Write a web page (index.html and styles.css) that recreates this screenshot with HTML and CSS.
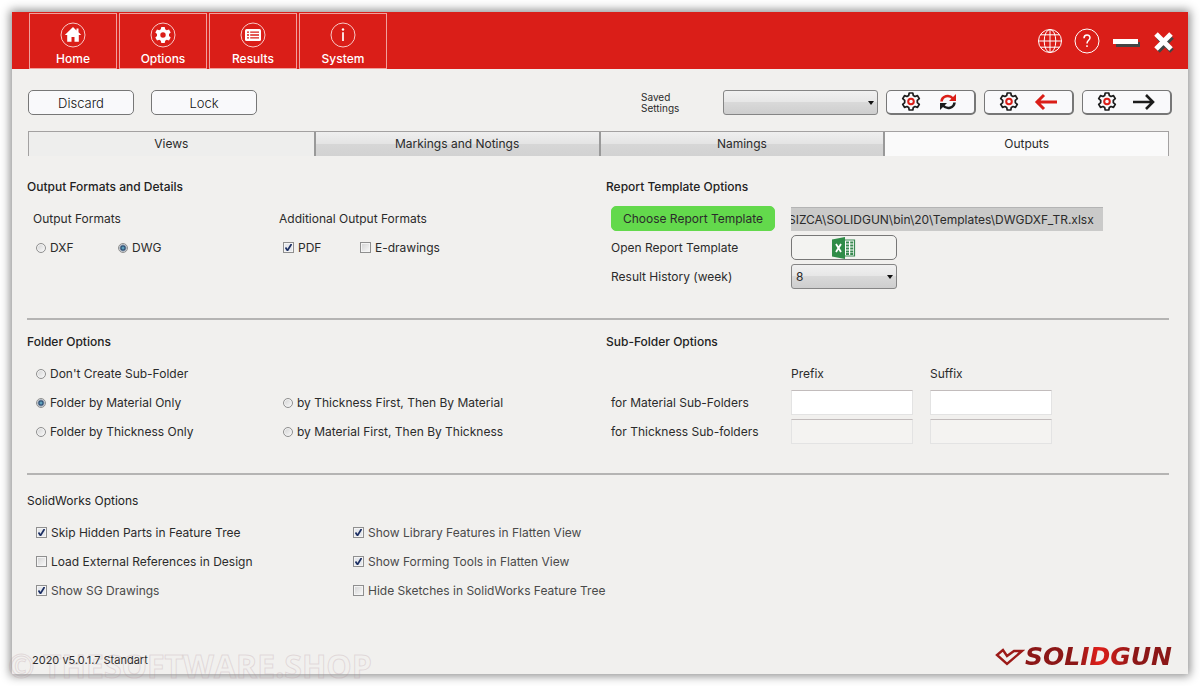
FILE: index.html
```html
<!DOCTYPE html>
<html lang="en">
<head>
<meta charset="utf-8">
<title>SolidGun</title>
<link rel="stylesheet" href="styles.css">
</head>
<body>
<svg width="0" height="0" class="defs" aria-hidden="true">
  <defs>
    <symbol id="gear" viewBox="0 0 20 20">
      <path d="M8.200 1h3.600l.5 2.500 1.700 1 2.500-.9 1.800 3.100-2 1.700v2.200l2 1.700-1.800 3.100-2.500-.9-1.700 1-.5 2.500H8.200l-.5-2.500-1.700-1-2.500.9-1.800-3.100 2-1.700V8.400l-2-1.700 1.800-3.100 2.500.9 1.700-1z" fill="none" stroke="#1c1c1c" stroke-width="1.700" stroke-linejoin="round"/>
      <circle cx="10" cy="9.500" r="2.800" fill="none" stroke="#da1e18" stroke-width="2"/>
    </symbol>
  </defs>
</svg>
<div class="window">
  <header class="header">
    <nav class="nav">
      <button class="nav-btn"><svg viewBox="0 0 26 26"><circle class="ring" cx="13" cy="13" r="12"/><path fill="#fff" d="M13 5 4.800 13h2.400v6.800h4.300V15h3v4.800h4.300V13h2.400l-2.700-2.700V6.500h-2v1.900z"/></svg>Home</button>
      <button class="nav-btn"><svg viewBox="0 0 26 26"><circle class="ring" cx="13" cy="13" r="12"/><path fill="#fff" fill-rule="evenodd" d="M11.300 5h3.400l.5 2.300 1.500.9 2.300-.8 1.700 3-1.700 1.600v2l1.700 1.600-1.700 3-2.300-.8-1.500.9-.5 2.300h-3.400l-.5-2.300-1.500-.9-2.300.8-1.700-3L7 14v-2l-1.700-1.600 1.700-3 2.300.8 1.500-.9zM13 10.300a2.700 2.700 0 1 0 0 5.400 2.700 2.700 0 0 0 0-5.400z"/></svg>Options</button>
      <button class="nav-btn"><svg viewBox="0 0 26 26"><circle class="ring" cx="13" cy="13" r="12"/><rect x="5" y="7" width="16" height="12" rx="1.500" fill="#fff"/><path stroke="#da1e18" stroke-width="1.300" d="M7 10.200h2M10.200 10.200H19M7 13h2M10.200 13H19M7 15.800h2M10.200 15.800H19"/></svg>Results</button>
      <button class="nav-btn"><svg viewBox="0 0 26 26"><circle class="ring" cx="13" cy="13" r="12"/><circle cx="13" cy="7.500" r="1.200" fill="#fff"/><path stroke="#fff" stroke-width="1.700" d="M13 10.200V19"/></svg>System</button>
    </nav>
    <div class="win-actions">
      <button aria-label="Language"><svg width="26" height="26" viewBox="0 0 26 26" class="line"><circle cx="13" cy="13" r="11.500"/><ellipse cx="13" cy="13" rx="5.800" ry="11.500"/><path d="M13 1.500v23M1.500 13h23M3.500 6.800h19M3.500 19.200h19"/></svg></button>
      <button aria-label="Help"><svg width="26" height="26" viewBox="0 0 26 26" class="line"><circle cx="13" cy="13" r="12"/><path stroke-width="1.500" d="M10 10.200c0-4.200 6-4.200 6-.4 0 2.400-3 2.600-3 5.600M13 17.300v1.800"/></svg></button>
      <button aria-label="Minimize"><svg width="30" height="26" viewBox="0 0 30 26"><path fill="#444" d="M5 14h24v5H5z"/><path fill="#fff" d="M2 11h25v5H2z"/></svg></button>
      <button aria-label="Close"><svg width="24" height="26" viewBox="0 0 24 26"><path stroke="#444" stroke-width="5" d="m6 9 14 14M20 9 6 23"/><path stroke="#fff" stroke-width="5" d="m4 6 15 15M19 6 4 21"/></svg></button>
    </div>
  </header>

  <div class="toolbar">
    <button class="btn">Discard</button>
    <button class="btn">Lock</button>
    <label class="saved" for="saved">Saved<br>Settings</label>
    <select id="saved" class="select select-saved"><option></option></select>
    <div class="tool-group">
      <button class="btn btn-icon" aria-label="Reload settings"><svg width="20" height="20"><use href="#gear"/></svg><svg width="24" height="18" viewBox="-3 0 24 18" fill="none" stroke-width="2.600"><path stroke="#da1e18" d="M2.500 8.500C3 3 10 1 14 5.500"/><path fill="#da1e18" d="M17 1v7h-7z"/><path stroke="#1c1c1c" d="M15.500 9.500C15 15 8 17 4 12.500"/><path fill="#1c1c1c" d="M1 17v-7h7z"/></svg></button>
      <button class="btn btn-icon" aria-label="Import settings"><svg width="20" height="20"><use href="#gear"/></svg><svg width="24" height="18" viewBox="0 0 24 18" fill="none" stroke="#da1e18" stroke-width="3"><path d="M23 9H3M10 2 3 9l7 7"/></svg></button>
      <button class="btn btn-icon" aria-label="Export settings"><svg width="20" height="20"><use href="#gear"/></svg><svg width="24" height="18" viewBox="0 0 24 18" fill="none" stroke="#1c1c1c" stroke-width="2.600"><path d="M1 9h20M14 2l7 7-7 7"/></svg></button>
    </div>
  </div>

  <div class="tabs" role="tablist">
    <button class="tab tab-flat" role="tab">Views</button>
    <button class="tab" role="tab">Markings and Notings</button>
    <button class="tab" role="tab">Namings</button>
    <button class="tab tab-active" role="tab" aria-selected="true">Outputs</button>
  </div>

  <main class="main">
    <section class="section section-first">
      <div>
        <h2>Output Formats and Details</h2>
        <div class="formats">
          <div role="group" aria-labelledby="of">
            <div class="row subhead" id="of">Output Formats</div>
            <div class="pair pair-radio">
              <label class="row opt"><input type="radio" name="fmt">DXF</label>
              <label class="row opt"><input type="radio" name="fmt" checked>DWG</label>
            </div>
          </div>
          <div role="group" aria-labelledby="af">
            <div class="row" id="af">Additional Output Formats</div>
            <div class="pair pair-check">
              <label class="row opt"><input type="checkbox" checked>PDF</label>
              <label class="row opt"><input type="checkbox">E-drawings</label>
            </div>
          </div>
        </div>
      </div>
      <div>
        <h2>Report Template Options</h2>
        <div class="report">
          <div class="row"><button class="btn btn-green">Choose Report Template</button></div>
          <div class="row"><input class="path" type="text" readonly aria-label="Report template path" value="SIZCA\SOLIDGUN\bin\20\Templates\DWGDXF_TR.xlsx"></div>
          <div class="row" id="open">Open Report Template</div>
          <div class="row"><button class="btn btn-excel" aria-labelledby="open"><svg width="24" height="22" viewBox="0 0 24 22"><path fill="#fff" stroke="#3a8a52" stroke-width="1.200" d="M12 3h10.500v16H12z"/><path stroke="#3a8a52" stroke-width="2" d="M14 5.500h3M18.200 5.500h3M14 8.500h3M18.200 8.500h3M14 11.500h3M18.200 11.500h3M14 14.500h3M18.200 14.500h3M14 17h3M18.200 17h3"/><path fill="#2f8c48" d="M0 2.500 13 0v22L0 19.500z"/><path stroke="#fff" stroke-width="1.800" d="m4 7 5 8M9 7l-5 8"/></svg></button></div>
          <label class="row" for="hist">Result History (week)</label>
          <div class="row"><select id="hist" class="select select-hist"><option>8</option></select></div>
        </div>
      </div>
    </section>

    <section class="section">
      <div>
        <h2>Folder Options</h2>
        <div class="folders">
          <label class="row opt wide"><input type="radio" name="folder">Don't Create Sub-Folder</label>
          <label class="row opt"><input type="radio" name="folder" checked>Folder by Material Only</label>
          <label class="row opt"><input type="radio" name="folder">by Thickness First, Then By Material</label>
          <label class="row opt"><input type="radio" name="folder">Folder by Thickness Only</label>
          <label class="row opt"><input type="radio" name="folder">by Material First, Then By Thickness</label>
        </div>
      </div>
      <div>
        <h2>Sub-Folder Options</h2>
        <div class="subfolders">
          <div class="row"></div><div class="row">Prefix</div><div class="row">Suffix</div>
          <div class="row">for Material Sub-Folders</div>
          <div class="row"><input class="field" type="text" aria-label="Material prefix"></div>
          <div class="row"><input class="field" type="text" aria-label="Material suffix"></div>
          <div class="row">for Thickness Sub-folders</div>
          <div class="row"><input class="field" type="text" disabled aria-label="Thickness prefix"></div>
          <div class="row"><input class="field" type="text" disabled aria-label="Thickness suffix"></div>
        </div>
      </div>
    </section>

    <section class="section section-last">
      <div>
        <h2 class="light">SolidWorks Options</h2>
        <div class="works">
          <label class="row opt"><input type="checkbox" checked>Skip Hidden Parts in Feature Tree</label>
          <label class="row opt soft"><input type="checkbox" checked>Show Library Features in Flatten View</label>
          <label class="row opt"><input type="checkbox">Load External References in Design</label>
          <label class="row opt soft"><input type="checkbox" checked>Show Forming Tools in Flatten View</label>
          <label class="row opt soft"><input type="checkbox" checked>Show SG Drawings</label>
          <label class="row opt soft"><input type="checkbox">Hide Sketches in SolidWorks Feature Tree</label>
        </div>
      </div>
    </section>
  </main>

  <footer class="footer">
    <span class="version">2020 v5.0.1.7 Standart</span>
    <div class="logo"><svg width="30" height="18" viewBox="0 0 30 18"><path fill="none" stroke="#9c1a18" stroke-width="2.400" d="M8 2 2 7l10 9L27 3H19l-7 5z"/></svg><span>SOLIDGUN</span></div>
  </footer>
  <div class="watermark">© THESOFTWARE.SHOP</div>
</div>
</body>
</html>
```
FILE: styles.css
```css
* { box-sizing: border-box; }

body {
  margin: 0;
  min-height: 100vh;
  padding: 12px;
  display: flex;
  background: #fff;
  color: #2b2b2b;
  font: 12px/20px Inter, "Liberation Sans", sans-serif;
}

button, input, select { font: inherit; color: inherit; margin: 0; }
button { padding: 0; border: 0; background: none; }
.defs { position: absolute; }

.window {
  position: relative;
  flex: 1;
  display: flex;
  flex-direction: column;
  background: #f1f0ee;
  box-shadow: 0 0 9px 2px rgba(0, 0, 0, 0.45);
}

/* Header */
.header {
  display: flex;
  justify-content: space-between;
  align-items: center;
  height: 57px;
  padding: 0 12px 0 17px;
  background: #da1e18;
}
.nav { display: flex; gap: 2px; }
.nav-btn {
  width: 88px;
  height: 56px;
  display: flex;
  flex-direction: column;
  align-items: center;
  padding-top: 8px;
  border: 1px solid #f0a09c;
  color: #fff;
  font-weight: 500;
  line-height: 22px;
}
.nav-btn svg { width: 26px; height: 26px; flex: none; }
.ring { fill: none; stroke: #f8c8c5; stroke-width: 1; }
.win-actions { display: flex; align-items: center; gap: 11px; }
.win-actions svg { display: block; }
.line { fill: none; stroke: #fff; stroke-width: 1; }

/* Toolbar */
.toolbar {
  display: flex;
  align-items: center;
  padding: 21px 16px 16px;
}
.btn {
  width: 106px;
  height: 25px;
  border: 1px solid #777;
  border-radius: 5px;
  background: #f9f9fb;
}
.toolbar .btn { font-size: 13px; font-weight: 300; color: #111; }
.toolbar .btn + .btn { margin-left: 17px; }
.saved { margin-left: auto; width: 82px; font-size: 10px; line-height: 11px; }
.tool-group { display: flex; gap: 8px; margin-left: 8px; }
.tool-group .btn + .btn { margin-left: 0; }
.btn-icon {
  display: flex;
  align-items: center;
  justify-content: center;
  gap: 15px;
  width: 90px;
  border-width: 1px 2px 2px 1px;
}
.select {
  appearance: none;
  height: 25px;
  padding: 0 4px;
  border: 1px solid #858585;
  border-radius: 3px;
  background:
    url("data:image/svg+xml,%3Csvg xmlns='http://www.w3.org/2000/svg' viewBox='0 0 6 4'%3E%3Cpath d='M0 0h6L3 4z' fill='%23111'/%3E%3C/svg%3E") right 3px center / 6px 4px no-repeat,
    linear-gradient(#f1f1f1, #e6e6e6 50%, #d9d9d9 50%, #cecece);
}
.select-saved { width: 155px; }
.select-hist { width: 106px; }

/* Tabs */
.tabs {
  display: grid;
  grid-template-columns: repeat(4, 1fr);
  margin: 0 19px 0 16px;
  border: solid #a3a1a1;
  border-width: 1px 1px 0;
}
.tab {
  height: 24px;
  background: linear-gradient(#efefef, #e4e4e4 48%, #d6d6d6 52%, #d2d2d2);
}
.tab + .tab { border-left: 2px solid #999; }
.tab-flat { background: #eeeeed; }
.tab-active { background: #fafafa; }

/* Sections */
.main { padding: 0 19px 0 15px; }
.section {
  display: grid;
  grid-template-columns: 579fr 563fr;
  padding: 12px 0 27px;
  border-bottom: 2px solid #b5b4b3;
}
.section-first { padding-top: 21px; }
.section-last { padding: 16px 0 0; border: 0; }
.section-last > div { grid-column: 1 / -1; }
h2 {
  margin: 0 0 7px;
  font-size: 12px;
  line-height: 20px;
  font-weight: 500;
  color: #222;
}
.light { font-weight: 400; }
.row { display: flex; align-items: center; height: 29px; white-space: nowrap; }
.subhead { padding-left: 6px; }
.soft { color: #4a4a4a; }

.formats { display: grid; grid-template-columns: 252fr 327fr; }
.pair { display: grid; }
.pair-radio { padding-left: 9px; grid-template-columns: 82px 1fr; }
.pair-check { padding-left: 4px; grid-template-columns: 77px 1fr; }
.folders { display: grid; grid-template-columns: 247fr 323fr; padding-left: 9px; }
.wide { grid-column: 1 / -1; }
.works { display: grid; grid-template-columns: 317fr 816fr; padding-left: 9px; }
.report { display: grid; grid-template-columns: 180px 1fr; padding-left: 5px; }
.subfolders {
  display: grid;
  grid-template-columns: 163px 122px 122px;
  column-gap: 17px;
  padding-left: 5px;
}

/* Controls */
.opt { gap: 4px; }
.opt input {
  appearance: none;
  flex: none;
  width: 11px;
  height: 11px;
  border: 1px solid #8f8f8f;
  background: linear-gradient(135deg, #d2d2d2, #fafafa);
  box-shadow: inset 0 0 0 1px #f4f4f4;
}
.opt input[type="radio"] { width: 10px; height: 10px; border-radius: 50%; }
.opt input[type="radio"]:checked { background: radial-gradient(circle, #5fa0bb 0 1px, #24466e 2px, #e4e4e4 4px); box-shadow: none; }
.opt input[type="checkbox"]:checked {
  background:
    url("data:image/svg+xml,%3Csvg xmlns='http://www.w3.org/2000/svg' viewBox='0 0 9 9'%3E%3Cpath d='M1.500 4.500 3.500 7.500 7.500 1' fill='none' stroke='%231c2f63' stroke-width='1.700'/%3E%3C/svg%3E") center / 9px 9px no-repeat,
    #e6e8ec;
}
.btn-green { width: 164px; background: #63d94c; border-color: #63d94c; }
.btn-excel { display: flex; align-items: center; justify-content: center; background: #f3f3f1; }
.path {
  width: 312px;
  height: 24px;
  padding: 0;
  border: 0;
  border-top: 1px solid #b4b4b4;
  background: #cacac9;
  text-indent: -3px;
}
.field {
  width: 100%;
  height: 25px;
  padding: 0 4px;
  border: 1px solid #e3e3e3;
  border-top-color: #c2bcbc;
  background: #fff;
}
.field:disabled { background: #f4f3f1; }

/* Footer */
.footer {
  display: flex;
  justify-content: space-between;
  align-items: flex-end;
  margin-top: auto;
  padding: 0 16px 4px 20px;
}
.version { font-size: 11px; }
.logo { display: flex; align-items: center; }
.logo span {
  font: italic bold 25px/26px "DejaVu Sans", sans-serif;
  background: linear-gradient(90deg, #8c1717 35%, #df1f1a 50%, #8c1717 75%);
  background-clip: text;
  color: transparent;
}
.watermark {
  position: absolute;
  left: -4px;
  bottom: -12px;
  font: bold 32px/40px "Open Sans", sans-serif;
  color: transparent;
  -webkit-text-stroke: 1px rgba(175, 140, 150, 0.25);
  white-space: nowrap;
  pointer-events: none;
}
```
